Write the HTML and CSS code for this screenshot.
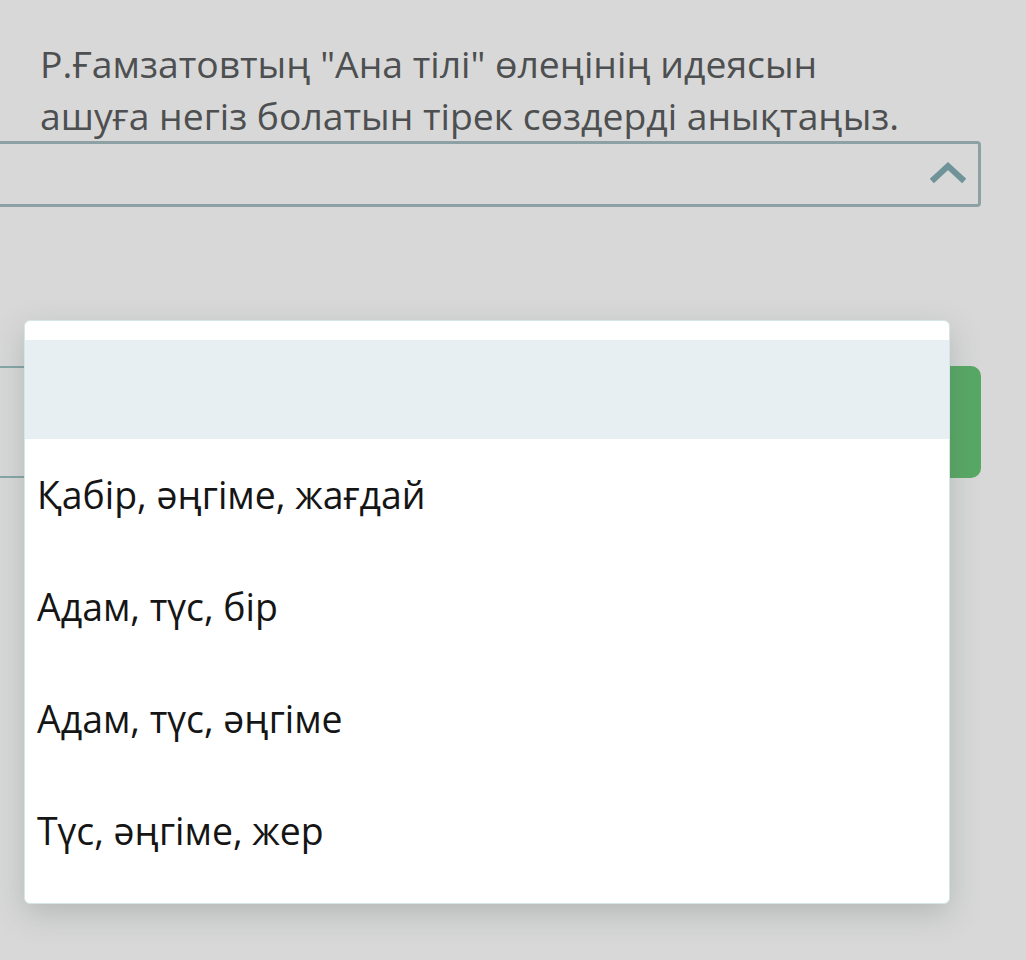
FILE: index.html
```html
<!DOCTYPE html>
<html>

<head>
    <link rel="stylesheet" href="styles.css">
</head>

<body>
    <div class="page">
        <p class="question">Р.Ғамзатовтың "Ана тілі" өлеңінің идеясын ашуға негіз болатын тірек сөздерді анықтаңыз.</p>

        <div class="select">
            <svg class="chevron" width="36" height="24" viewBox="0 0 36 24">
                <path d="M4 19 L18 6 L32 19" fill="none" stroke="#6f9398" stroke-width="6" stroke-linecap="square" stroke-linejoin="miter" />
            </svg>
        </div>

        <div class="answer-row">
            <div class="answer-input"></div>
            <button class="answer-btn"></button>
        </div>

        <ul class="dropdown">
            <li class="option option-empty active"></li>
            <li class="option">Қабір, әңгіме, жағдай</li>
            <li class="option">Адам, түс, бір</li>
            <li class="option">Адам, түс, әңгіме</li>
            <li class="option">Түс, әңгіме, жер</li>
        </ul>
    </div>
</body>

</html>
```

FILE: styles.css
```css
html,
body {
    margin: 0;
    height: 100%;
    background-color: #d8d8d8;
    overflow: hidden;
}

.page {
    position: relative;
    height: 960px;
    font-family: "Open Sans", "Noto Sans", sans-serif;
}

.question {
    margin: 0;
    padding: 38px 120px 0 40px;
    font-size: 37.3px;
    line-height: 52px;
    color: #4d4f50;
}

.select {
    display: flex;
    justify-content: flex-end;
    align-items: center;
    height: 60px;
    margin: -1px 45px 0 -10px;
    border: 3px solid #8da1a5;
    border-radius: 4px;
    padding-right: 12px;
}

.chevron {
    display: block;
    margin-top: -4px;
}

.answer-row {
    display: flex;
    margin: 159px 45px 0 -10px;
    height: 112px;
}

.answer-input {
    flex: 1;
    border-top: 2px solid #86a6a6;
    border-bottom: 2px solid #86a6a6;
}

.answer-btn {
    width: 160px;
    border: none;
    border-radius: 10px;
    background-color: #58a865;
}

.dropdown {
    position: absolute;
    left: 24px;
    top: 320px;
    width: 926px;
    margin: 0;
    padding: 19px 0 17px;
    list-style: none;
    background-color: #fff;
    border: 1px solid #d4e6e6;
    border-radius: 6px;
    box-sizing: border-box;
    height: 584px;
    box-shadow: 0 10px 30px rgba(80, 90, 90, 0.25);
}

.option {
    height: 112px;
    padding-left: 12px;
    font-size: 37.4px;
    line-height: 112px;
    color: #151515;
}

.option-empty {
    height: 99px;
}

.active {
    background-color: #e8eff2;
}
```
